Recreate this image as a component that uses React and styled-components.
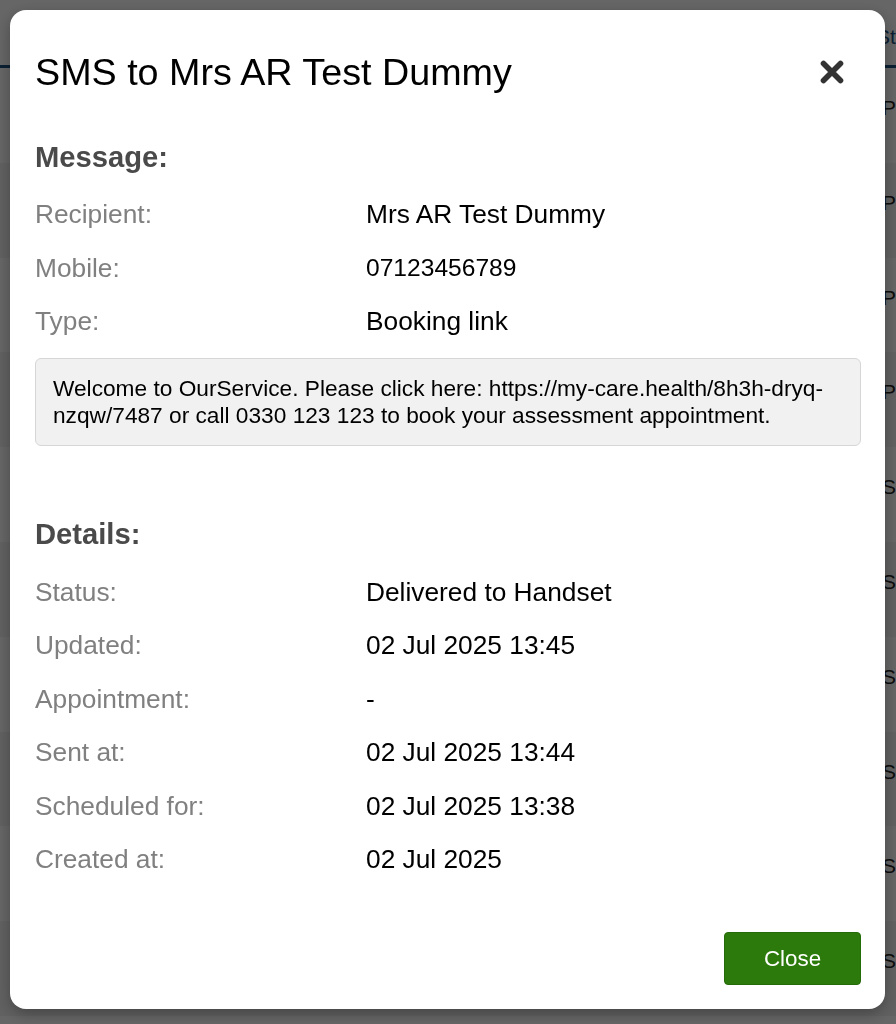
import React from "react";
import styled, { createGlobalStyle } from "styled-components";

const GlobalStyle = createGlobalStyle`
  html, body {
    margin: 0;
    height: 100%;
  }
  body {
    font-family: "Liberation Sans", Arial, Helvetica, sans-serif;
    background: #fff;
    overflow: hidden;
  }
`;

// page behind the dialog (mostly hidden by the backdrop)
const Page = styled.div`
  height: 1024px;
  background: #fff;
  overflow: hidden;
`;

const TableHead = styled.div`
  display: grid;
  grid-template-columns: 876px 1fr;
  height: 68px;
  padding-top: 8px;
  box-sizing: border-box;
  border-bottom: 3px solid #1c4f7f;
  align-items: center;
  overflow: hidden;
`;

const HeadCell = styled.div`
  color: #1c4f7f;
  font-size: 21px;
  white-space: nowrap;
  overflow: hidden;
`;

const TableRow = styled.div`
  display: grid;
  grid-template-columns: 882px 1fr;
  height: 94.8px;
  box-sizing: border-box;
  padding-top: 26px;
  font-size: 21px;
  line-height: 28px;
  color: #222;
  white-space: nowrap;
  overflow: hidden;
  background: ${(p) => (p.$odd ? "#f3f3f3" : "#fff")};
`;

const Cell = styled.div`
  overflow: hidden;
`;

const Backdrop = styled.div`
  position: fixed;
  inset: 0;
  background: rgba(0, 0, 0, 0.6);
  padding: 10px 11px 15px 10px;
  box-sizing: border-box;
  display: flex;
`;

const Modal = styled.div`
  flex: 1;
  background: #fff;
  border-radius: 16px;
  display: flex;
  flex-direction: column;
  box-shadow: 0 5px 15px rgba(0, 0, 0, 0.3);
`;

const ModalHeader = styled.div`
  display: flex;
  align-items: center;
  justify-content: space-between;
  padding: 40px 40px 0 25px;
`;

const Title = styled.h4`
  margin: 0;
  font-size: 37.7px;
  font-weight: 400;
  line-height: 44px;
  color: #000;
`;

const CloseX = styled.button`
  width: 26px;
  height: 26px;
  padding: 0;
  border: none;
  background: none;
  cursor: pointer;
  display: flex;
`;

const ModalBody = styled.div`
  flex: 1;
  padding: 46px 24px 0 25px;
`;

const SectionTitle = styled.h3`
  margin: ${(p) => (p.$spaced ? "71px" : "0")} 0 13.5px;
  font-size: 29.2px;
  font-weight: 700;
  line-height: 34px;
  color: #4a4a4a;
`;

const InfoList = styled.div`
  display: grid;
  grid-template-columns: 331px 1fr;
  grid-auto-rows: 53.5px;
  align-items: center;
`;

const Label = styled.div`
  font-size: 26.3px;
  line-height: 30px;
  color: #808080;
`;

const Value = styled.div`
  font-size: ${(p) => (p.$small ? "24.6px" : "26.3px")};
  line-height: 30px;
  color: #000;
`;

const MessageBox = styled.div`
  margin-top: 10.25px;
  background: #f1f1f1;
  border: 1px solid #d6d6d6;
  border-radius: 6px;
  padding: 16px 17px;
  font-size: 22.7px;
  line-height: 27px;
  color: #000;
`;

const Footer = styled.div`
  display: flex;
  justify-content: flex-end;
  padding: 0 24px 24px 0;
`;

const CloseButton = styled.button`
  width: 137px;
  height: 53px;
  background: #2b7a0b;
  border: 1px solid #256b09;
  border-radius: 4px;
  color: #fff;
  font-family: inherit;
  font-size: 22.4px;
  cursor: pointer;
`;

const statuses = ["Pe", "Pe", "Pe", "Pe", "Se", "Se", "Se", "Se", "Se", "Se"];

const messageInfo = [
  { label: "Recipient:", value: "Mrs AR Test Dummy" },
  { label: "Mobile:", value: "07123456789", small: true },
  { label: "Type:", value: "Booking link" },
];

const detailsInfo = [
  { label: "Status:", value: "Delivered to Handset" },
  { label: "Updated:", value: "02 Jul 2025 13:45" },
  { label: "Appointment:", value: "-" },
  { label: "Sent at:", value: "02 Jul 2025 13:44" },
  { label: "Scheduled for:", value: "02 Jul 2025 13:38" },
  { label: "Created at:", value: "02 Jul 2025" },
];

function XIcon() {
  return (
    <svg width="26" height="26" viewBox="0 0 26 26">
      <path d="M4.5 4.5 L21.5 21.5 M21.5 4.5 L4.5 21.5" stroke="#333" strokeWidth="5.6" strokeLinecap="round" fill="none" />
    </svg>
  );
}

export default function App() {
  return (
    <>
      <GlobalStyle />
      <Page>
        <TableHead>
          <div />
          <HeadCell>St</HeadCell>
        </TableHead>
        {statuses.map((s, i) => (
          <TableRow key={i} $odd={i % 2 === 1}>
            <div />
            <Cell>{s}</Cell>
          </TableRow>
        ))}
      </Page>

      <Backdrop>
        <Modal>
          <ModalHeader>
            <Title>SMS to Mrs AR Test Dummy</Title>
            <CloseX aria-label="Close">
              <XIcon />
            </CloseX>
          </ModalHeader>

          <ModalBody>
            <SectionTitle>Message:</SectionTitle>
            <InfoList>
              {messageInfo.map((row) => (
                <React.Fragment key={row.label}>
                  <Label>{row.label}</Label>
                  <Value $small={row.small}>{row.value}</Value>
                </React.Fragment>
              ))}
            </InfoList>
            <MessageBox>
              Welcome to OurService. Please click here: https://my-care.health/8h3h-dryq-nzqw/7487 or call 0330 123 123 to book your assessment appointment.
            </MessageBox>

            <SectionTitle $spaced>Details:</SectionTitle>
            <InfoList>
              {detailsInfo.map((row) => (
                <React.Fragment key={row.label}>
                  <Label>{row.label}</Label>
                  <Value>{row.value}</Value>
                </React.Fragment>
              ))}
            </InfoList>
          </ModalBody>

          <Footer>
            <CloseButton>Close</CloseButton>
          </Footer>
        </Modal>
      </Backdrop>
    </>
  );
}
